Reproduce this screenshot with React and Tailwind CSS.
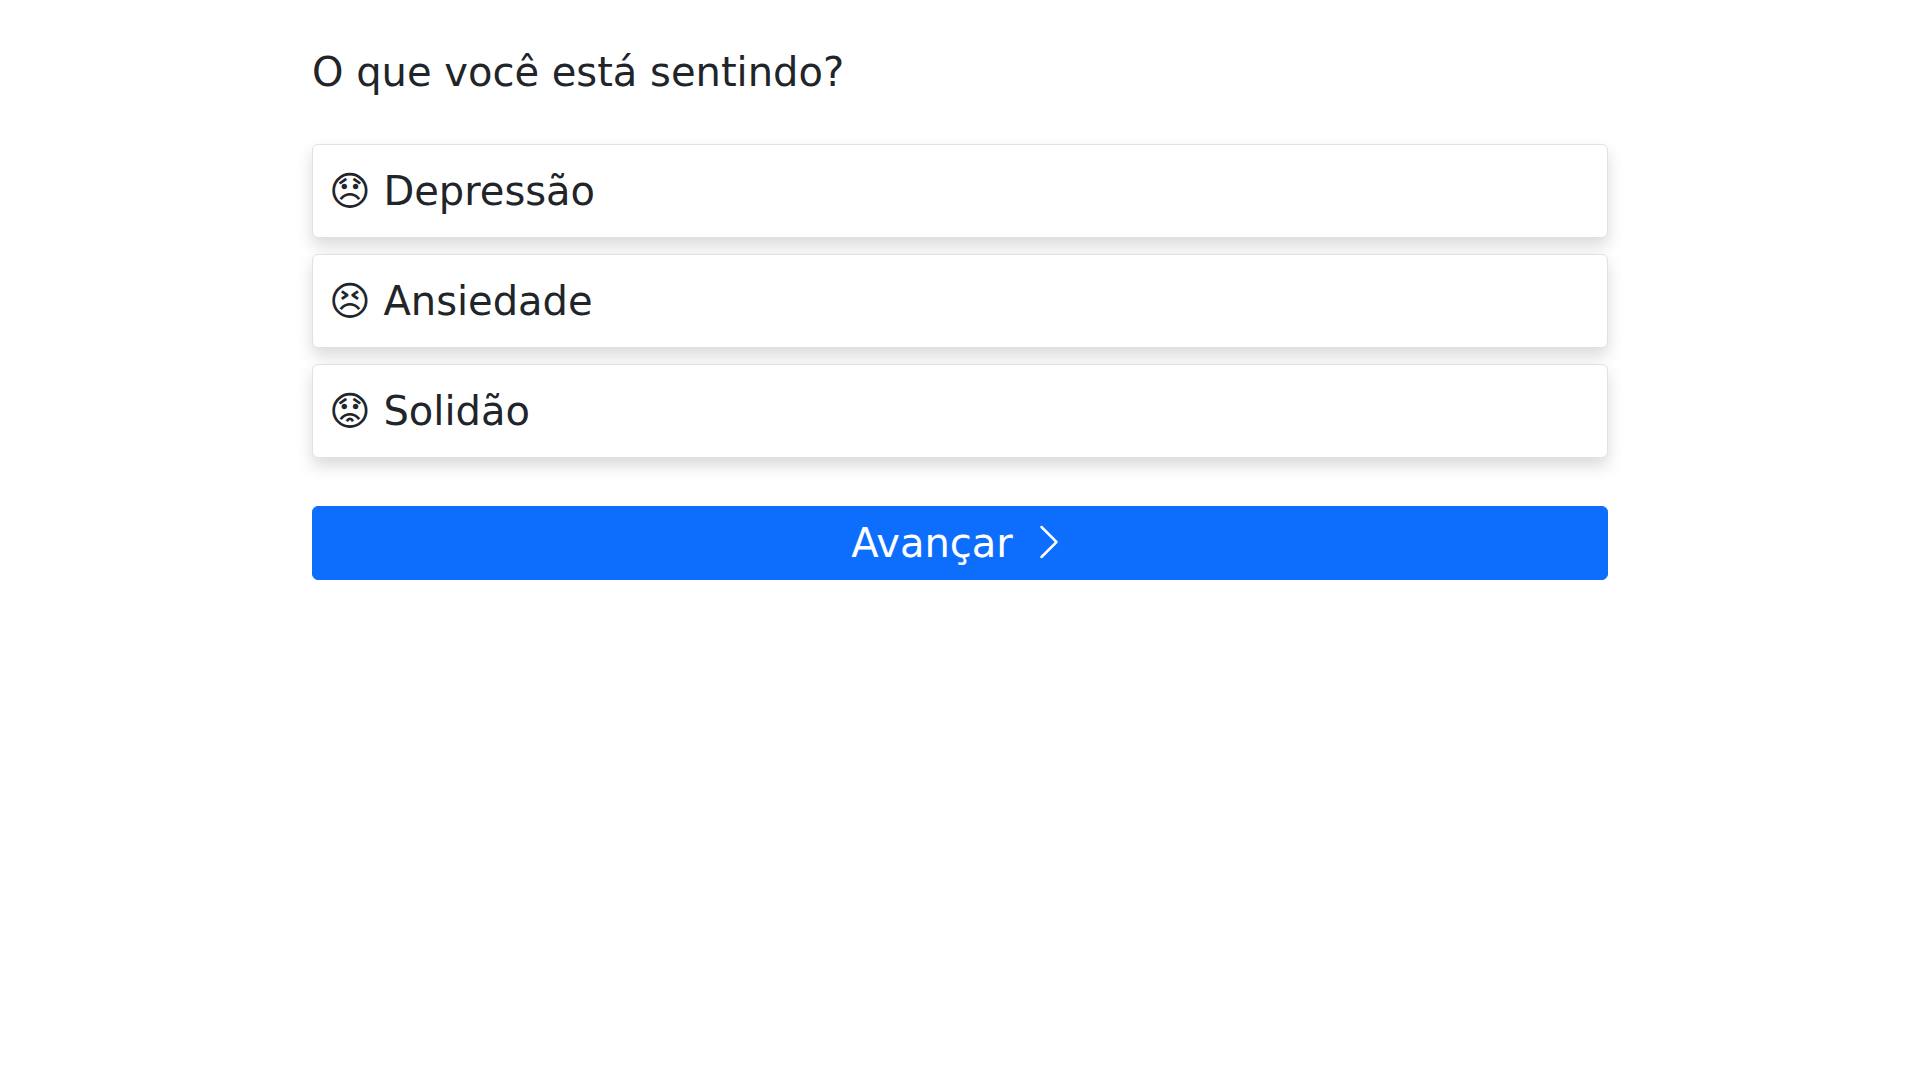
import { BsChevronRight } from "react-icons/bs";

const feelings = [
  { emoji: "😞", label: "Depressão" },
  { emoji: "😣", label: "Ansiedade" },
  { emoji: "😟", label: "Solidão" },
];

export default function App() {
  return (
    <main className="mx-auto max-w-[1320px] px-3 pt-12 font-['DejaVu_Sans',sans-serif] text-[40px] leading-[60px] text-[#212529]">
      <h1 className="mb-12 leading-12">O que você está sentindo?</h1>
      <div className="flex flex-col gap-4">
        {feelings.map(({ emoji, label }) => (
          <button key={label} type="button" className="w-full rounded-md border border-[#dee2e6] bg-white p-4 text-left shadow-[0_8px_16px_rgba(0,0,0,0.15)]">
            {emoji} {label}
          </button>
        ))}
      </div>
      <button type="button" className="mt-12 w-full rounded-md border border-[#0d6efd] bg-[#0d6efd] px-3 py-1.5 text-center text-white">
        Avançar
        <BsChevronRight aria-hidden="true" className="ml-4 inline-block align-[-5px]" />
      </button>
    </main>
  );
}
